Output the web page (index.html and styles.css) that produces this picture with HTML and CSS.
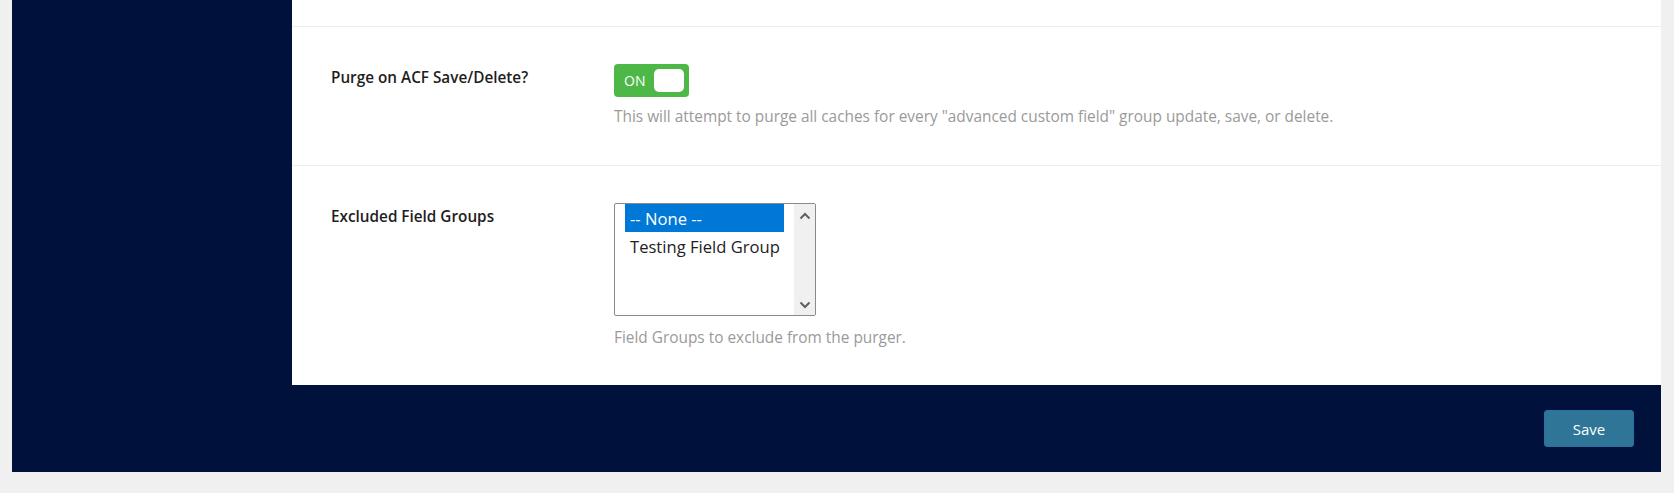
FILE: index.html
```html
<!DOCTYPE html>
<html lang="en">
<head>
<meta charset="utf-8">
<title>Settings</title>
<link rel="stylesheet" href="styles.css">
</head>
<body>
<div class="wrap">
  <div class="main">
    <div class="sidebar"></div>
    <div class="panel">
      <div class="row-top"></div>
      <div class="row row-acf">
        <div class="label">Purge on ACF Save/Delete?</div>
        <div class="field">
          <div class="toggle"><span class="toggle-text">ON</span><span class="knob"></span></div>
          <p class="help">This will attempt to purge all caches for every "advanced custom field" group update, save, or delete.</p>
        </div>
      </div>
      <div class="row row-groups">
        <div class="label">Excluded Field Groups</div>
        <div class="field">
          <div class="listbox">
            <div class="options">
              <div class="option selected">-- None --</div>
              <div class="option">Testing Field Group</div>
            </div>
            <div class="scrollbar">
              <svg class="arrow" width="12" height="8" viewBox="0 0 12 8"><polyline points="1.5,6.5 6,2 10.5,6.5" fill="none" stroke="#606060" stroke-width="2"/></svg>
              <svg class="arrow" width="12" height="8" viewBox="0 0 12 8"><polyline points="1.5,1.5 6,6 10.5,1.5" fill="none" stroke="#606060" stroke-width="2"/></svg>
            </div>
          </div>
          <p class="help help-groups">Field Groups to exclude from the purger.</p>
        </div>
      </div>
    </div>
  </div>
  <div class="footer">
    <button class="save">Save</button>
  </div>
</div>
</body>
</html>
```

FILE: styles.css
```css
html, body {
  margin: 0;
  padding: 0;
}
body {
  background: #f0f0f0;
  font-family: "Open Sans", "Noto Sans", "Liberation Sans", sans-serif;
  width: 1674px;
  height: 493px;
  overflow: hidden;
}
.wrap {
  margin-left: 12px;
  width: 1649px;
  height: 472px;
  background: #00123c;
  display: flex;
  flex-direction: column;
}
.main {
  display: flex;
  height: 385px;
}
.sidebar {
  width: 280px;
  flex: none;
}
.panel {
  flex: 1;
  background: #ffffff;
  display: flex;
  flex-direction: column;
}
.row-top {
  height: 26px;
  border-bottom: 1px solid #ececec;
}
.row {
  display: flex;
  padding-left: 39px;
}
.row-acf {
  box-sizing: border-box;
  height: 139px;
  padding-top: 37px;
  border-bottom: 1px solid #ececec;
}
.row-groups {
  flex: 1;
  padding-top: 37px;
}
.label {
  width: 283px;
  flex: none;
  font-size: 15.3px;
  font-weight: 600;
  color: #1e1e1e;
  line-height: 20px;
  padding-top: 3px;
}
.field {
  display: flex;
  flex-direction: column;
  align-items: flex-start;
}
.toggle {
  width: 75px;
  height: 33px;
  background: #4db848;
  border-radius: 4px;
  display: flex;
  align-items: center;
  box-sizing: border-box;
  padding: 0 5px 0 10px;
  justify-content: space-between;
}
.toggle-text {
  color: #ffffff;
  font-size: 14px;
  line-height: 1;
}
.knob {
  width: 30px;
  height: 23px;
  background: #ffffff;
  border-radius: 5px;
}
.help {
  margin: 10px 0 0;
  font-size: 15.4px;
  line-height: 20px;
  color: #9a9a9a;
}
.help-groups {
  margin-top: 12px;
}
.listbox {
  width: 202px;
  height: 113px;
  box-sizing: border-box;
  border: 1px solid #8a8a8a;
  border-radius: 2px;
  display: flex;
  background: #ffffff;
}
.options {
  flex: 1;
  padding: 0 10px;
}
.option {
  font-size: 16.6px;
  height: 28px;
  line-height: 26px;
  padding-top: 2px;
  box-sizing: border-box;
  color: #222222;
  padding-left: 5px;
}
.option.selected {
  background: #0078d7;
  color: #ffffff;
}
.scrollbar {
  width: 21px;
  background: #f0f0f0;
  display: flex;
  flex-direction: column;
  justify-content: space-between;
  align-items: center;
  padding: 8px 0 6px;
  box-sizing: border-box;
}
.arrow {
  display: block;
}
.footer {
  flex: 1;
  display: flex;
  justify-content: flex-end;
  align-items: flex-start;
  padding: 25px 27px 0 0;
}
.save {
  width: 90px;
  height: 37px;
  background: #2e7597;
  border: 1px solid #2b6fa8;
  border-radius: 3px;
  color: #ffffff;
  font-family: "Open Sans", "Noto Sans", sans-serif;
  font-size: 15px;
  padding: 0;
}
```
